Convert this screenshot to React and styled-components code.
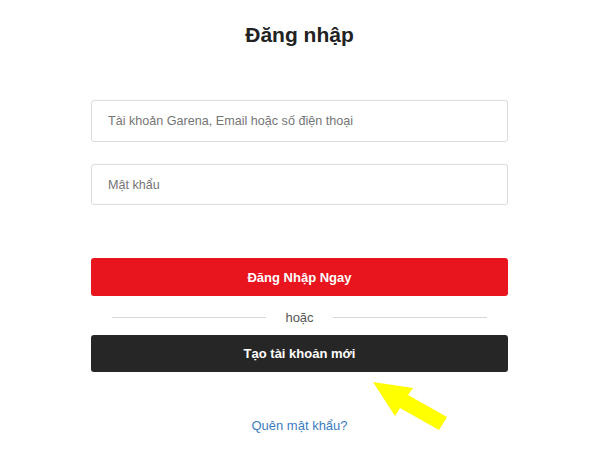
import React from 'react';
import styled, { createGlobalStyle } from 'styled-components';

const GlobalStyle = createGlobalStyle`
  html, body {
    margin: 0;
    padding: 0;
    background: #fff;
    font-family: Arial, "Liberation Sans", sans-serif;
  }
`;

const Page = styled.div`
  position: relative;
  width: 600px;
  height: 474px;
  display: flex;
  justify-content: center;
`;

const Form = styled.div`
  width: 417px;
  margin-left: -1px;
  display: flex;
  flex-direction: column;
  align-items: stretch;
`;

const Title = styled.h1`
  margin: 22px 0 0 0;
  font-size: 21px;
  line-height: 26px;
  font-weight: bold;
  color: #222;
  text-align: center;
`;

const Input = styled.input`
  box-sizing: border-box;
  height: ${props => props.h}px;
  margin-top: ${props => props.top}px;
  padding: 0 16px;
  border: 1px solid #dcdcdc;
  border-radius: 3px;
  font-family: inherit;
  font-size: 12.6px;
  color: #333;
  outline: none;

  &::placeholder {
    color: #757575;
  }
`;

const Button = styled.button`
  box-sizing: border-box;
  height: ${props => props.h}px;
  margin-top: ${props => props.top}px;
  border: none;
  border-radius: 3px;
  background: ${props => props.bg};
  color: #fff;
  font-family: inherit;
  font-size: 13px;
  font-weight: bold;
  cursor: pointer;
`;

const Divider = styled.div`
  display: flex;
  align-items: center;
  gap: 19px;
  margin: 13px 21px 0;
  height: 17px;
  font-size: 13px;
  color: #555;

  &::before, &::after {
    content: '';
    flex: 1;
    height: 1px;
    background: #d6d6d6;
  }
`;

const Link = styled.a`
  margin-top: 46px;
  align-self: center;
  font-size: 13px;
  color: #3b7cc0;
  text-decoration: none;
`;

const Arrow = styled.svg`
  position: absolute;
  left: 370px;
  top: 379px;
`;

export default function App() {
  return (
    <Page>
      <GlobalStyle />
      <Form>
        <Title>Đăng nhập</Title>
        <Input top={52} h={42} placeholder="Tài khoản Garena, Email hoặc số điện thoại" />
        <Input top={22} h={41} type="password" placeholder="Mật khẩu" />
        <Button top={53} h={38} bg="#e8141e">Đăng Nhập Ngay</Button>
        <Divider>hoặc</Divider>
        <Button top={9} h={37} bg="#262626">Tạo tài khoản mới</Button>
        <Link href="#">Quên mật khẩu?</Link>
      </Form>
      <Arrow width="82" height="56" viewBox="370 379 82 56">
        <polygon
          points="373,382 413,388 408,395 447,417 439,430 400,408 395,416"
          fill="#ffff00"
        />
      </Arrow>
    </Page>
  );
}
